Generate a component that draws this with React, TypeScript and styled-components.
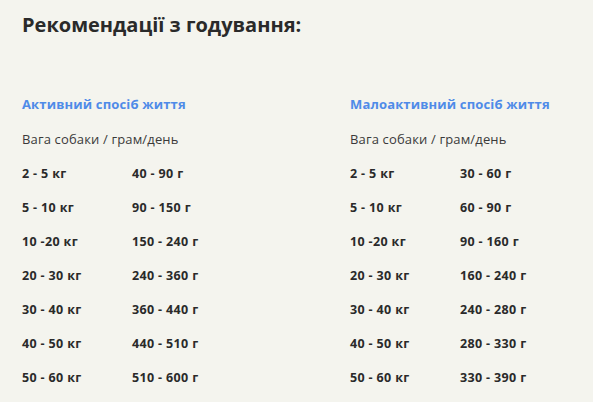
import React from "react";
import styled, { createGlobalStyle } from "styled-components";

const GlobalStyle = createGlobalStyle`
  html, body {
    margin: 0;
    padding: 0;
    background: #f4f4ee;
  }
  body {
    font-family: "Open Sans", "Liberation Sans", sans-serif;
    color: #2b2b2b;
  }
`;

const Page = styled.div`
  width: 593px;
  height: 402px;
  box-sizing: border-box;
  padding: 11px 22px 0;
  background: #f4f4ee;
  overflow: hidden;
`;

const Title = styled.h2`
  margin: 0;
  font-size: 20px;
  line-height: 28px;
  font-weight: 700;
  color: #2a2a2a;
`;

const Columns = styled.div`
  display: grid;
  grid-template-columns: 328px 1fr;
  margin-top: 55px;
`;

const Column = styled.div`
  display: flex;
  flex-direction: column;
`;

const Heading = styled.h3`
  margin: 0;
  font-size: 13px;
  line-height: 20px;
  font-weight: 700;
  letter-spacing: 0.15px;
  color: #4f8be8;
`;

const Caption = styled.div`
  margin-top: 15px;
  font-size: 13px;
  line-height: 20px;
  letter-spacing: 0.15px;
  color: #3a3a3a;
`;

const Table = styled.div`
  margin-top: 7px;
  display: flex;
  flex-direction: column;
`;

const Row = styled.div`
  display: grid;
  grid-template-columns: 110px 1fr;
  height: 34px;
  align-items: center;
  font-size: 12.5px;
  font-weight: 700;
  letter-spacing: 0.35px;
  color: #2a2a2a;
`;

interface Plan {
  title: string;
  rows: [string, string][];
}

const plans: Plan[] = [
  {
    title: "Активний спосіб життя",
    rows: [
      ["2 - 5 кг", "40 - 90 г"],
      ["5 - 10 кг", "90 - 150 г"],
      ["10 -20 кг", "150 - 240 г"],
      ["20 - 30 кг", "240 - 360 г"],
      ["30 - 40 кг", "360 - 440 г"],
      ["40 - 50 кг", "440 - 510 г"],
      ["50 - 60 кг", "510 - 600 г"],
    ],
  },
  {
    title: "Малоактивний спосіб життя",
    rows: [
      ["2 - 5 кг", "30 - 60 г"],
      ["5 - 10 кг", "60 - 90 г"],
      ["10 -20 кг", "90 - 160 г"],
      ["20 - 30 кг", "160 - 240 г"],
      ["30 - 40 кг", "240 - 280 г"],
      ["40 - 50 кг", "280 - 330 г"],
      ["50 - 60 кг", "330 - 390 г"],
    ],
  },
];

const App = () => (
  <>
    <GlobalStyle />
    <Page>
      <Title>Рекомендації з годування:</Title>
      <Columns>
        {plans.map((plan) => (
          <Column key={plan.title}>
            <Heading>{plan.title}</Heading>
            <Caption>Вага собаки / грам/день</Caption>
            <Table>
              {plan.rows.map(([weight, grams]) => (
                <Row key={weight}>
                  <span>{weight}</span>
                  <span>{grams}</span>
                </Row>
              ))}
            </Table>
          </Column>
        ))}
      </Columns>
    </Page>
  </>
);

export default App;
